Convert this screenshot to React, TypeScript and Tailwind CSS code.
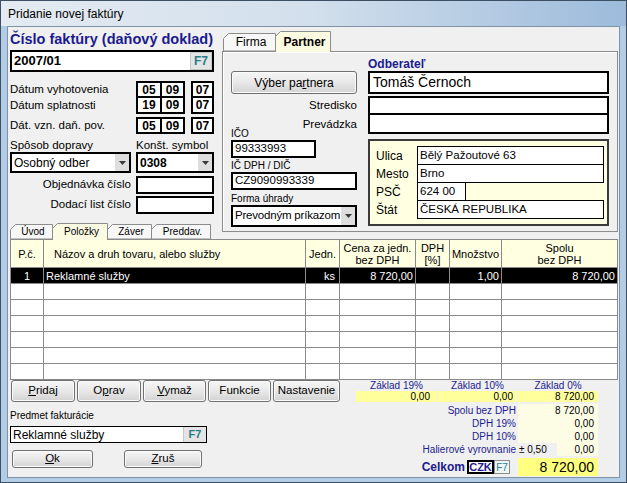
import React from "react";

const NAVY = "text-[#1b1b8f]";

function Arrow() {
  return (
    <div className="w-[14px] h-full bg-[#dedede] flex items-center justify-center shrink-0">
      <svg width="7" height="4" viewBox="0 0 7 4">
        <path d="M0 0h7L3.5 4z" fill="#3a3a3a" />
      </svg>
    </div>
  );
}

function Tab({
  w,
  h,
  cls,
  label,
  active,
  textCls,
}: {
  w: number;
  h: number;
  cls: string;
  label: string;
  active?: boolean;
  textCls: string;
}) {
  const fill = active ? "#fbfbe2" : "#f7f7f7";
  return (
    <div className={`relative shrink-0 flex items-center justify-center ${cls} ${active ? "z-20" : "z-10"}`}>
      <svg className="absolute inset-0" width={w} height={h} viewBox={`0 0 ${w} ${h}`}>
        <path
          d={`M0.5 ${h} V5.5 L5.5 0.5 H${w - 0.5} V${h}${active ? "" : " Z"}`}
          fill={fill}
          stroke="#8c8c8c"
          strokeWidth="1"
        />
        {active ? <rect x="1" y={h - 2} width={w - 2} height="2" fill={fill} /> : null}
      </svg>
      <span className={`relative pl-[3px] ${textCls}`}>{label}</span>
    </div>
  );
}

function Btn({ cls, children }: { cls: string; children: React.ReactNode }) {
  return (
    <div
      className={`flex items-center justify-center rounded-[3px] border border-[#707070] bg-gradient-to-b from-[#f6f6f6] via-[#e8e8e8] to-[#d3d3d3] shadow-[inset_0_0_0_1px_#fbfbfb] ${cls}`}
    >
      {children}
    </div>
  );
}

function DateRow({
  label,
  d,
  m,
  y,
  cls,
  boxBorder,
}: {
  label: string;
  d: string;
  m: string;
  y: string;
  cls: string;
  boxBorder: string;
}) {
  return (
    <div className={`flex items-center ${cls}`}>
      <div className="w-[126px] text-[11.5px]">{label}</div>
      <div className={`flex w-[49px] h-full bg-white border-2 border-black ${boxBorder}`}>
        <div className="w-[24px] border-r-2 border-black flex items-center justify-center font-bold text-[12px]">{d}</div>
        <div className="flex-1 flex items-center justify-center font-bold text-[12px]">{m}</div>
      </div>
      <div className={`ml-[6px] w-[23px] h-full bg-white border-2 border-black flex items-center justify-center font-bold text-[12px] ${boxBorder}`}>
        {y}
      </div>
    </div>
  );
}

export default function App() {
  const cols = ["w-[33px]", "w-[262px]", "w-[34px]", "w-[76px]", "w-[34px]", "w-[52px]", "w-[116px]"];
  const emptyRows = [0, 1, 2, 3, 4, 5];
  return (
    <div className="w-[627px] h-[483px] flex flex-col bg-[#b4cde6] border border-[#3c4f63] font-['Liberation_Sans',Arial,sans-serif] text-black overflow-hidden">
      <div className="h-[25px] shrink-0 flex items-center pl-[7px] text-[12px] bg-gradient-to-r from-[#e4ebf2] via-[#d2dfec] to-[#9dbbdb]">
        Pridanie novej faktúry
      </div>
      <div className="flex-1 mx-[6px] mb-[4px] bg-[#f0f0f0] border border-[#7f93a8] flex flex-col">
        {/* TOP */}
        <div className="flex items-start h-[212px] shrink-0">
          {/* left column */}
          <div className="ml-[2px] w-[204px] pt-[3px] flex flex-col">
            <div className={`h-[19px] leading-[19px] font-bold text-[14.5px] ${NAVY} whitespace-nowrap`}>
              Číslo faktúry (daňový doklad)
            </div>
            <div className="mt-[1px] h-[22px] bg-white border-2 border-black flex items-center">
              <div className="flex-1 pl-[2px] font-bold text-[13px]">2007/01</div>
              <div className="w-[22px] h-[18px] bg-[#e4e4e4] border border-[#c8c8c8] flex items-center justify-center text-[12px] font-bold text-[#2a7d86]">
                F7
              </div>
            </div>
            <DateRow label="Dátum vyhotovenia" d="05" m="09" y="07" cls="mt-[9px] h-[17px]" boxBorder="" />
            <DateRow label="Dátum splatnosti" d="19" m="09" y="07" cls="h-[16px]" boxBorder="border-t-0" />
            <DateRow label="Dát. vzn. daň. pov." d="05" m="09" y="07" cls="mt-[3px] h-[17px]" boxBorder="" />
            <div className="mt-[4px] h-[14px] flex text-[11.5px] leading-[14px]">
              <div className="w-[126px]">Spôsob dopravy</div>
              <div>Konšt. symbol</div>
            </div>
            <div className="h-[21px] flex">
              <div className="w-[121px] h-full bg-white border-2 border-black flex items-center">
                <div className="flex-1 pl-[2px] text-[12px]">Osobný odber</div>
                <Arrow />
              </div>
              <div className="ml-[5px] w-[78px] h-full bg-white border-2 border-black flex items-center">
                <div className="flex-1 pl-[2px] text-[12px] font-bold">0308</div>
                <Arrow />
              </div>
            </div>
            <div className="mt-[3px] h-[18px] flex items-center">
              <div className="w-[121px] text-right text-[11.5px]">Objednávka číslo</div>
              <div className="ml-[5px] w-[78px] h-full bg-white border-2 border-black" />
            </div>
            <div className="mt-[2px] h-[18px] flex items-center">
              <div className="w-[121px] text-right text-[11.5px]">Dodací list číslo</div>
              <div className="ml-[5px] w-[78px] h-full bg-white border-2 border-black" />
            </div>
            <div className="mt-[8px] h-[17px] flex items-end relative z-20">
              <Tab w={43} h={15} cls="w-[43px] h-[15px]" label="Úvod" textCls="text-[10px]" />
              <Tab w={56} h={17} cls="w-[56px] h-[17px] -ml-[1px] -mb-[1px]" label="Položky" active textCls="text-[10px]" />
              <Tab w={45} h={15} cls="w-[45px] h-[15px] -ml-[1px]" label="Záver" textCls="text-[10px]" />
              <Tab w={60} h={15} cls="w-[60px] h-[15px] -ml-[1px]" label="Preddav." textCls="text-[10px]" />
            </div>
          </div>

          {/* right panel */}
          <div className="ml-[8px] w-[396px] pt-[4px] flex flex-col">
            <div className="h-[20px] flex items-end pl-[1px] relative z-20">
              <Tab w={53} h={18} cls="w-[53px] h-[18px]" label="Firma" textCls="text-[12px]" />
              <Tab w={56} h={21} cls="w-[56px] h-[21px] -ml-[1px] -mb-[1px]" label="Partner" active textCls="text-[12px] font-bold" />
            </div>
            <div className="h-[181px] border border-[#8c8c8c] shadow-[inset_1px_1px_0_#ffffff] flex flex-col pt-[5px] px-[8px]">
              <div className="flex gap-[11px]">
                <div className="w-[126px] flex flex-col">
                  <div className="h-[14px]" />
                  <Btn cls="h-[23px] text-[12px]">
                    <span>
                      Výber pa<span className="underline underline-offset-[1px]">r</span>tnera
                    </span>
                  </Btn>
                  <div className="mt-[2px] h-[19px] flex items-center justify-end text-[11.5px]">Stredisko</div>
                  <div className="h-[19px] flex items-center justify-end text-[11.5px]">Prevádzka</div>
                </div>
                <div className="w-[241px] flex flex-col">
                  <div className={`h-[14px] leading-[14px] text-[12px] font-bold ${NAVY}`}>Odberateľ</div>
                  <div className="h-[23px] bg-white border-2 border-black flex items-center pl-[3px] text-[14px]">Tomáš Černoch</div>
                  <div className="mt-[2px] h-[19px] bg-white border-2 border-black" />
                  <div className="h-[19px] bg-white border-2 border-t-0 border-black" />
                </div>
              </div>
              <div className="flex gap-[11px]">
                <div className="w-[126px] -mt-[6px] flex flex-col">
                  <div className="h-[12px] leading-[12px] text-[10px]">IČO</div>
                  <div className="w-[85px] h-[18px] bg-white border-2 border-black flex items-center pl-[2px] text-[11.5px]">99333993</div>
                  <div className="h-[14px] leading-[16px] text-[10px]">IČ DPH / DIČ</div>
                  <div className="h-[18px] bg-white border-2 border-black flex items-center pl-[2px] text-[11.5px]">CZ9090993339</div>
                  <div className="h-[15px] leading-[17px] text-[10px]">Forma úhrady</div>
                  <div className="h-[22px] bg-white border-2 border-black flex items-center">
                    <div className="flex-1 pl-[2px] text-[11.5px] whitespace-nowrap tracking-[-0.2px]">Prevodným príkazom</div>
                    <Arrow />
                  </div>
                </div>
                <div className="w-[241px] mt-[5px] h-[87px] bg-[#ffffe1] border-2 border-[#3a3a3a] pt-[5px] pl-[6px] flex flex-col">
                  {[
                    ["Ulica", "Bělý Pažoutové 63", "w-[187px]", ""],
                    ["Mesto", "Brno", "w-[187px]", "-mt-[1px]"],
                    ["PSČ", "624 00", "w-[49px]", "-mt-[1px]"],
                    ["Štát", "ČESKÁ REPUBLIKA", "w-[187px]", "-mt-[1px]"],
                  ].map(([l, v, w, m]) => (
                    <div key={l} className={`flex h-[19px] items-center ${m}`}>
                      <div className="w-[41px] text-[12px]">{l}</div>
                      <div className={`${w} h-full bg-white border border-black flex items-center pl-[2px] text-[11.5px]`}>{v}</div>
                    </div>
                  ))}
                </div>
              </div>
            </div>
          </div>
        </div>

        {/* GRID */}
        <div className="ml-[2px] w-[607px] h-[140px] shrink-0 bg-white">
          <table className="w-full table-fixed border-collapse text-[11px]">
            <colgroup>
              {cols.map((c, i) => (
                <col key={i} className={c} />
              ))}
            </colgroup>
            <thead>
              <tr className="h-[28px] bg-[#ffffe1]">
                <th className="border border-[#8a8a8a] font-normal leading-[12px]">P.č.</th>
                <th className="border border-[#8a8a8a] font-normal text-left pl-[10px] leading-[12px]">Názov a druh tovaru, alebo služby</th>
                <th className="border border-[#8a8a8a] font-normal leading-[12px]">Jedn.</th>
                <th className="border border-[#8a8a8a] font-normal leading-[12px]">
                  Cena za jedn.
                  <br />
                  bez DPH
                </th>
                <th className="border border-[#8a8a8a] font-normal leading-[12px]">
                  DPH
                  <br />
                  [%]
                </th>
                <th className="border border-[#8a8a8a] font-normal leading-[12px]">Množstvo</th>
                <th className="border border-[#8a8a8a] font-normal leading-[12px]">
                  Spolu
                  <br />
                  bez DPH
                </th>
              </tr>
            </thead>
            <tbody>
              <tr className="h-[16px] bg-black text-white">
                <td className="border border-[#8a8a8a] text-center p-0 leading-[14px]">1</td>
                <td className="border border-[#8a8a8a] pl-[2px] p-0 leading-[14px]">Reklamné služby</td>
                <td className="border border-[#8a8a8a] text-right pr-[4px] p-0 leading-[14px]">ks</td>
                <td className="border border-[#8a8a8a] text-right pr-[2px] p-0 leading-[14px]">8 720,00</td>
                <td className="border border-[#8a8a8a] p-0" />
                <td className="border border-[#8a8a8a] text-right pr-[2px] p-0 leading-[14px]">1,00</td>
                <td className="border border-[#8a8a8a] text-right pr-[2px] p-0 leading-[14px]">8 720,00</td>
              </tr>
              {emptyRows.map((r) => (
                <tr key={r} className="h-[16px]">
                  {cols.map((c, i) => (
                    <td key={i} className="border border-[#8a8a8a] p-0" />
                  ))}
                </tr>
              ))}
            </tbody>
          </table>
        </div>

        {/* BOTTOM */}
        <div className="flex flex-1">
          <div className="ml-[2px] w-[340px] pt-[1px] flex flex-col">
            <div className="flex gap-[2px] h-[22px] pl-[1px]">
              <Btn cls="w-[64px] text-[11.5px]">
                <span>
                  <span className="underline underline-offset-[1px]">P</span>ridaj
                </span>
              </Btn>
              <Btn cls="w-[64px] text-[11.5px]">
                <span>
                  O<span className="underline underline-offset-[1px]">p</span>rav
                </span>
              </Btn>
              <Btn cls="w-[63px] text-[11.5px]">
                <span>
                  <span className="underline underline-offset-[1px]">V</span>ymaž
                </span>
              </Btn>
              <Btn cls="w-[63px] text-[11.5px]">Funkcie</Btn>
              <Btn cls="w-[67px] text-[11.5px]">Nastavenie</Btn>
            </div>
            <div className="mt-[7px] h-[13px] leading-[13px] text-[10px]">Predmet fakturácie</div>
            <div className="mt-[4px] w-[197px] h-[17px] bg-white border border-black flex items-center">
              <div className="flex-1 pl-[2px] text-[12px]">Reklamné služby</div>
              <div className="w-[23px] h-full bg-[#e4e4e4] border-l border-[#c8c8c8] flex items-center justify-center text-[11px] font-bold text-[#2a7d86]">
                F7
              </div>
            </div>
            <div className="mt-[7px] flex h-[18px] pl-[2px]">
              <Btn cls="w-[81px] text-[11.5px]">
                <span>
                  <span className="underline underline-offset-[1px]">O</span>k
                </span>
              </Btn>
              <Btn cls="ml-[31px] w-[78px] text-[11.5px]">
                <span>
                  <span className="underline underline-offset-[1px]">Z</span>ruš
                </span>
              </Btn>
            </div>
          </div>

          <div className="ml-[6px] w-[242px] pt-[1px] flex flex-col text-[10px]">
            <div className={`grid grid-cols-[81px_81px_80px] h-[11px] leading-[11px] ${NAVY}`}>
              <div className="text-center">Základ 19%</div>
              <div className="text-center">Základ 10%</div>
              <div className="text-center">Základ 0%</div>
            </div>
            <div className="grid grid-cols-[81px_81px_80px] h-[11px] leading-[11px]">
              <div className="w-[80px] bg-[#ffff9c] text-right pr-[6px]">0,00</div>
              <div className="w-[80px] bg-[#ffff9c] text-right pr-[4px]">0,00</div>
              <div className="w-[80px] bg-[#ffff9c] text-right pr-[4px]">8 720,00</div>
            </div>
            <div className="mt-[2px]" />
            {[
              ["Spolu bez DPH", "8 720,00"],
              ["DPH 19%", "0,00"],
              ["DPH 10%", "0,00"],
            ].map(([l, v]) => (
              <div key={l} className="flex h-[13px] leading-[13px]">
                <div className={`w-[162px] text-right pr-[2px] ${NAVY}`}>{l}</div>
                <div className="w-[80px] bg-[#fdfde6] text-right pr-[4px]">{v}</div>
              </div>
            ))}
            <div className="flex h-[13px] leading-[13px]">
              <div className={`w-[162px] text-right pr-[2px] ${NAVY}`}>Halierové vyrovnanie</div>
              <div className="w-[39px] pl-[1px]">± 0,50</div>
              <div className="w-[41px] bg-[#fdfde6] text-right pr-[4px]">0,00</div>
            </div>
            <div className="mt-[2px] flex h-[18px] items-center">
              <div className={`w-[109px] text-right font-bold text-[12px] ${NAVY}`}>Celkom</div>
              <div className={`ml-[2px] w-[27px] h-[14px] border-2 border-black bg-white flex items-center justify-center font-bold text-[11px] ${NAVY}`}>
                CZK
              </div>
              <div className="w-[16px] h-[14px] border border-[#8a8a8a] bg-[#eef6f6] flex items-center justify-center text-[10px] text-[#2a7d86]">
                F7
              </div>
              <div className="ml-[8px] w-[80px] h-[18px] bg-[#ffff80] flex items-center justify-end pr-[4px] text-[14px]">8 720,00</div>
            </div>
          </div>
        </div>
      </div>
    </div>
  );
}
